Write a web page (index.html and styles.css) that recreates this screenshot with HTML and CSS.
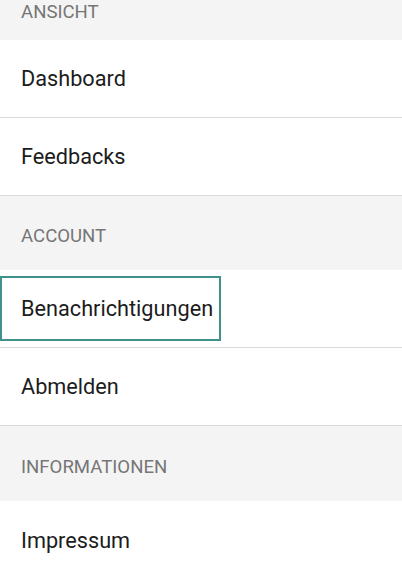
FILE: index.html
```html
<!DOCTYPE html>
<html lang="de">
<head>
<meta charset="utf-8">
<title>Einstellungen</title>
<link rel="stylesheet" href="styles.css">
</head>
<body>
<div class="settings">
  <div class="section-header section-header--first"><span class="section-title">ANSICHT</span></div>
  <div class="item"><span class="item-label">Dashboard</span></div>
  <div class="item"><span class="item-label">Feedbacks</span></div>
  <div class="section-header"><span class="section-title">ACCOUNT</span></div>
  <div class="item"><span class="item-label item-label--focused">Benachrichtigungen</span></div>
  <div class="item"><span class="item-label">Abmelden</span></div>
  <div class="section-header section-header--tall"><span class="section-title">INFORMATIONEN</span></div>
  <div class="item item--last"><span class="item-label">Impressum</span></div>
</div>
</body>
</html>
```
FILE: styles.css
```css
html, body {
  margin: 0;
  padding: 0;
  background: #ffffff;
}

body {
  font-family: Roboto, "Noto Sans", "Liberation Sans", sans-serif;
  width: 402px;
  height: 566px;
  overflow: hidden;
}

.settings {
  display: flex;
  flex-direction: column;
}

.section-header {
  box-sizing: border-box;
  height: 74px;
  background: #f4f4f4;
  padding: 31px 0 0 21px;
}

.section-header--first {
  height: 40px;
  padding-top: 3px;
}

.section-header--tall {
  height: 75px;
  padding-top: 32px;
}

.section-title {
  display: block;
  font-size: 18.6px;
  line-height: 18px;
  color: #767676;
}

.item {
  box-sizing: border-box;
  height: 78px;
  border-bottom: 1px solid #dadada;
  display: flex;
  align-items: center;
}

.item--last {
  border-bottom: none;
}

.item-label {
  box-sizing: border-box;
  padding-left: 21px;
  padding-top: 1px;
  font-size: 21.7px;
  line-height: 24px;
  color: #1c1c1c;
}

.item-label--focused {
  display: flex;
  align-items: center;
  height: 65px;
  padding-left: 19px;
  padding-right: 6px;
  border: 2px solid #3f918c;
}
```
